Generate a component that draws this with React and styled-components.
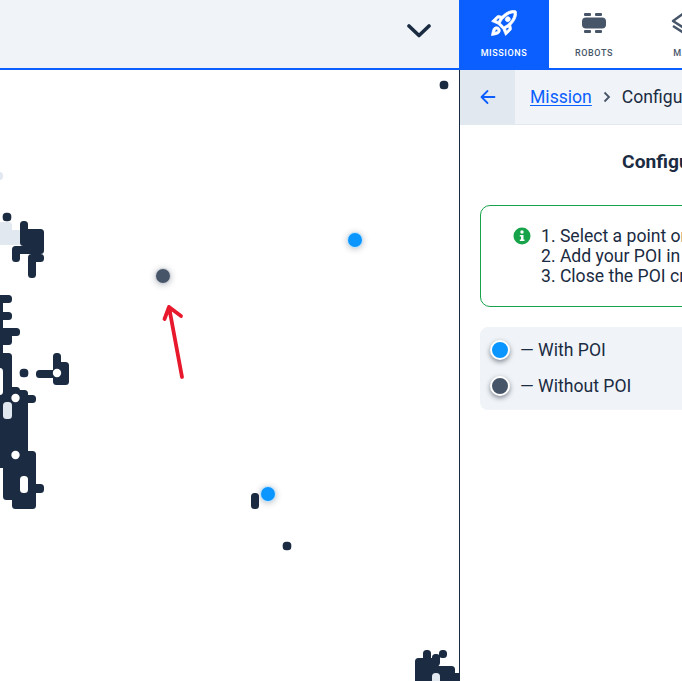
import React from 'react';
import styled, { createGlobalStyle } from 'styled-components';
import { MdOutlineRocketLaunch } from 'react-icons/md';

const Global = createGlobalStyle`
  html, body { margin: 0; padding: 0; background: #fff; overflow: hidden; }
  * { box-sizing: border-box; }
`;

const Page = styled.div`
  width: 682px; height: 681px; overflow: hidden; display: flex; flex-direction: column;
  font-family: Roboto, sans-serif; color: #1a2b42;
`;
const Header = styled.header`
  height: 70px; flex: none; display: flex; border-bottom: 2px solid #0b5fff;
`;
const HeaderBar = styled.div`
  flex: 1; background: #f0f4f8; display: flex; align-items: center; justify-content: flex-end; padding: 0 28px 6px 0;
`;
const Nav = styled.nav`
  width: 223px; flex: none; display: flex; overflow: hidden; background: #fff;
`;
const Tab = styled.div`
  width: 90px; flex: none; display: flex; flex-direction: column; align-items: center;
  padding-top: 8px; gap: 9px;
  background: ${p => (p.$active ? '#0b5fff' : '#fff')};
  color: ${p => (p.$active ? '#fff' : '#475569')};
`;
const TabIcon = styled.div`
  height: 30px; width: 30px; display: flex; align-items: center; justify-content: center;
`;
const BoldRocket = styled(MdOutlineRocketLaunch)`
  stroke: currentColor; stroke-width: .6px;
  path[fill='none'] { stroke: none; }
`;
const TabLabel = styled.span`
  font-size: 9px; font-weight: 500; letter-spacing: .6px; line-height: 12px; white-space: nowrap;
`;
const Body = styled.main`
  flex: 1; display: flex; min-height: 0;
`;
const MapArea = styled.div`
  position: relative; width: 460px; flex: none; border-right: 1px solid #1a2b42; overflow: hidden;
`;
const MapSvg = styled.svg`
  position: absolute; inset: 0; display: block;
`;
const MapPin = styled.span`
  position: absolute; width: 16px; height: 16px; border-radius: 50%;
  left: ${p => p.$x - 8}px; top: ${p => p.$y - 78}px;
  background: ${p => p.$color};
  border: 1px solid rgba(255, 255, 255, .75);
  box-shadow: 0 1px 6px rgba(30, 41, 59, .3);
`;
const Panel = styled.aside`
  width: 460px; flex: none; display: flex; flex-direction: column;
`;
const Crumbs = styled.div`
  height: 55px; flex: none; display: flex; align-items: center; background: #f0f4f8;
  border-bottom: 1px solid #e2e8f0; font-size: 17.6px;
`;
const BackButton = styled.div`
  width: 55px; height: 54px; flex: none; display: flex; align-items: center; justify-content: center;
  background: #e2e8f0; color: #0b5fff; margin: 0 15px 0 0;
`;
const CrumbLink = styled.a`
  color: #0b5fff; text-decoration: underline; text-underline-offset: 2px;
`;
const CrumbSep = styled.span`
  width: 30px; display: flex; justify-content: center; color: #475569;
`;
const CrumbText = styled.span`
  white-space: nowrap;
`;
const Content = styled.div`
  padding: 24px 20px 0; display: flex; flex-direction: column;
`;
const Title = styled.h2`
  margin: 0 0 30px; font-size: 19.2px; line-height: 26px; font-weight: 700; text-align: center; white-space: nowrap;
`;
const InfoBox = styled.div`
  height: 102px; border: 1px solid #16a34a; border-radius: 10px; display: flex; gap: 10px;
  padding: 20px 0 0 32px; font-size: 17.6px; line-height: 20px; white-space: nowrap;
`;
const InfoIcon = styled.svg`
  flex: none; margin-top: 1px;
`;
const Legend = styled.div`
  margin-top: 20px; height: 83px; border-radius: 8px; background: #f0f4f8; display: flex; flex-direction: column;
  padding: 5px 0 0 10px; gap: 0;
`;
const LegendRow = styled.div`
  height: 36px; display: flex; align-items: center; gap: 10px; font-size: 17.6px;
`;
const LegendPin = styled.span`
  width: 20px; height: 20px; flex: none; border-radius: 50%; background: ${p => p.$color};
  border: 2px solid #fff; box-shadow: 0 2px 5px rgba(15, 23, 42, .5);
`;

const DARK = '#1a2b42';
const LIGHT = '#e2e8f0';
const rectPath = rects => rects.map(([x1, y1, x2, y2]) =>
  `M${x1 + 3.5} ${y1 + 3.5}H${x2 - 3.5}V${y2 - 3.5}H${x1 + 3.5}Z`).join('');

const Blob = ({ rects, color = DARK }) => (
  <path d={rectPath(rects)} fill={color} stroke={color} strokeWidth="7" strokeLinejoin="round" />
);

const darkBlobs = [
  [[20, 221, 28, 237], [20, 229, 44, 246], [28, 229, 44, 254], [12, 246, 36, 254], [12, 246, 20, 262], [28, 254, 44, 262], [28, 254, 36, 278]],
  [[-8, 295, 12, 303], [-8, 295, 3, 320], [-8, 312, 12, 320], [-8, 312, 3, 340], [-8, 328, 20, 336], [-8, 328, 12, 345], [-8, 336, 3, 360], [-8, 353, 12, 395], [-8, 387, 20, 403], [12, 395, 36, 403], [-8, 390, 28, 456], [-8, 451, 36, 468], [3, 451, 36, 500], [12, 490, 36, 509], [30, 484, 44, 493]],
  [[36, 370, 60, 378], [53, 353, 61, 370], [53, 362, 69, 385]],
  [[423, 650, 431, 666], [415, 658, 439, 690], [439, 650, 447, 658], [432, 654, 440, 666], [415, 666, 455, 690], [415, 673, 470, 690]],
  [[251, 493, 259, 509]],
];
const dots = [[7, 217], [24, 373], [444, 85], [287, 546]];
const holes = [[57, 373, 4.2], [15.5, 398, 4.2], [15.5, 455, 4.2]];

const MapDrawing = () => (
  <MapSvg width="459" height="611" viewBox="0 70 459 611">
    <Blob color={LIGHT} rects={[[-8, 172, 3, 180]]} />
    <Blob color={LIGHT} rects={[[-8, 222, 12, 245], [-8, 230, 22, 245]]} />
    {darkBlobs.map((rects, i) => <Blob key={i} rects={rects} />)}
    {dots.map(([x, y]) => <rect key={`${x}-${y}`} x={x - 4.3} y={y - 4.3} width="8.600" height="8.600" rx="3.600" fill={DARK} />)}
    {holes.map(([x, y, r]) => <circle key={`${x}-${y}`} cx={x} cy={y} r={r} fill="#fff" />)}
    <Blob color="#fff" rects={[[-8, 368, 3, 395]]} />
    <Blob color={LIGHT} rects={[[3, 402, 12, 419]]} />
    <Blob color="#fff" rects={[[20, 476, 28, 493]]} />
    <Blob color={LIGHT} rects={[[432, 673, 440, 692]]} />
    <path d="M182 377 L169 307 M164.500 319 L169 307 L181 316" fill="none" stroke="#e8192c" strokeWidth="3.800" strokeLinecap="round" strokeLinejoin="round" />
  </MapSvg>
);

export default function App() {
  return (
    <Page>
      <Global />
      <Header>
        <HeaderBar>
          <svg width="24" height="14" viewBox="0 0 24 14" fill="none">
            <path d="M2 2 L12 11.500 L22 2" stroke={DARK} strokeWidth="3.600" strokeLinecap="round" strokeLinejoin="round" />
          </svg>
        </HeaderBar>
        <Nav>
          <Tab $active>
            <TabIcon><BoldRocket size={32} /></TabIcon>
            <TabLabel>MISSIONS</TabLabel>
          </Tab>
          <Tab>
            <TabIcon>
              <svg width="24" height="20" viewBox="0 0 24 20" fill="#475569">
                <rect x="0" y="4.500" width="24" height="11" rx="4" />
                <rect x="2" y="0" width="7" height="3" rx="1" />
                <rect x="13" y="0" width="7" height="3" rx="1" />
                <rect x="2" y="17" width="7" height="3" rx="1" />
                <rect x="13" y="17" width="7" height="3" rx="1" />
              </svg>
            </TabIcon>
            <TabLabel>ROBOTS</TabLabel>
          </Tab>
          <Tab>
            <TabIcon>
              <svg width="30" height="30" viewBox="0 0 30 30" fill="none" stroke="#475569" strokeWidth="2.400" strokeLinejoin="round">
                <path d="M15 5 L4 13 L15 20 L26 13 Z" />
                <path d="M4 18 L15 25 L26 18" />
              </svg>
            </TabIcon>
            <TabLabel>MAP</TabLabel>
          </Tab>
        </Nav>
      </Header>
      <Body>
        <MapArea>
          <MapDrawing />
          <MapPin $x={355} $y={240} $color="#0b96ff" />
          <MapPin $x={163} $y={276} $color="#475569" />
          <MapPin $x={268} $y={494} $color="#0b96ff" />
        </MapArea>
        <Panel>
          <Crumbs>
            <BackButton>
              <svg width="18" height="18" viewBox="0 0 18 18" fill="none" stroke="currentColor" strokeWidth="1.800" strokeLinecap="round" strokeLinejoin="round">
                <path d="M15.500 9 H3 M8.500 3 L2.500 9 L8.500 15" />
              </svg>
            </BackButton>
            <CrumbLink>Mission</CrumbLink>
            <CrumbSep>
              <svg width="8" height="12" viewBox="0 0 8 12" fill="none" stroke="currentColor" strokeWidth="1.800"><path d="M1.500 1.500 L6 6 L1.500 10.500" /></svg>
            </CrumbSep>
            <CrumbText>Configure a POI</CrumbText>
          </Crumbs>
          <Content>
            <Title>Configure a POI</Title>
            <InfoBox>
              <InfoIcon width="18" height="18" viewBox="0 0 18 18">
                <circle cx="9" cy="9" r="8.500" fill="#16a34a" />
                <circle cx="9" cy="5" r="1.700" fill="#fff" />
                <path d="M6.800 8 H10.500 V12.500 H11.500 V14 H6.800 V12.500 H8 V9.500 H6.800 Z" fill="#fff" />
              </InfoIcon>
              <div>
                <div>1. Select a point on the map</div>
                <div>2. Add your POI in the form</div>
                <div>3. Close the POI creation</div>
              </div>
            </InfoBox>
            <Legend>
              <LegendRow><LegendPin $color="#0b96ff" />— With POI</LegendRow>
              <LegendRow><LegendPin $color="#475569" />— Without POI</LegendRow>
            </Legend>
          </Content>
        </Panel>
      </Body>
    </Page>
  );
}
